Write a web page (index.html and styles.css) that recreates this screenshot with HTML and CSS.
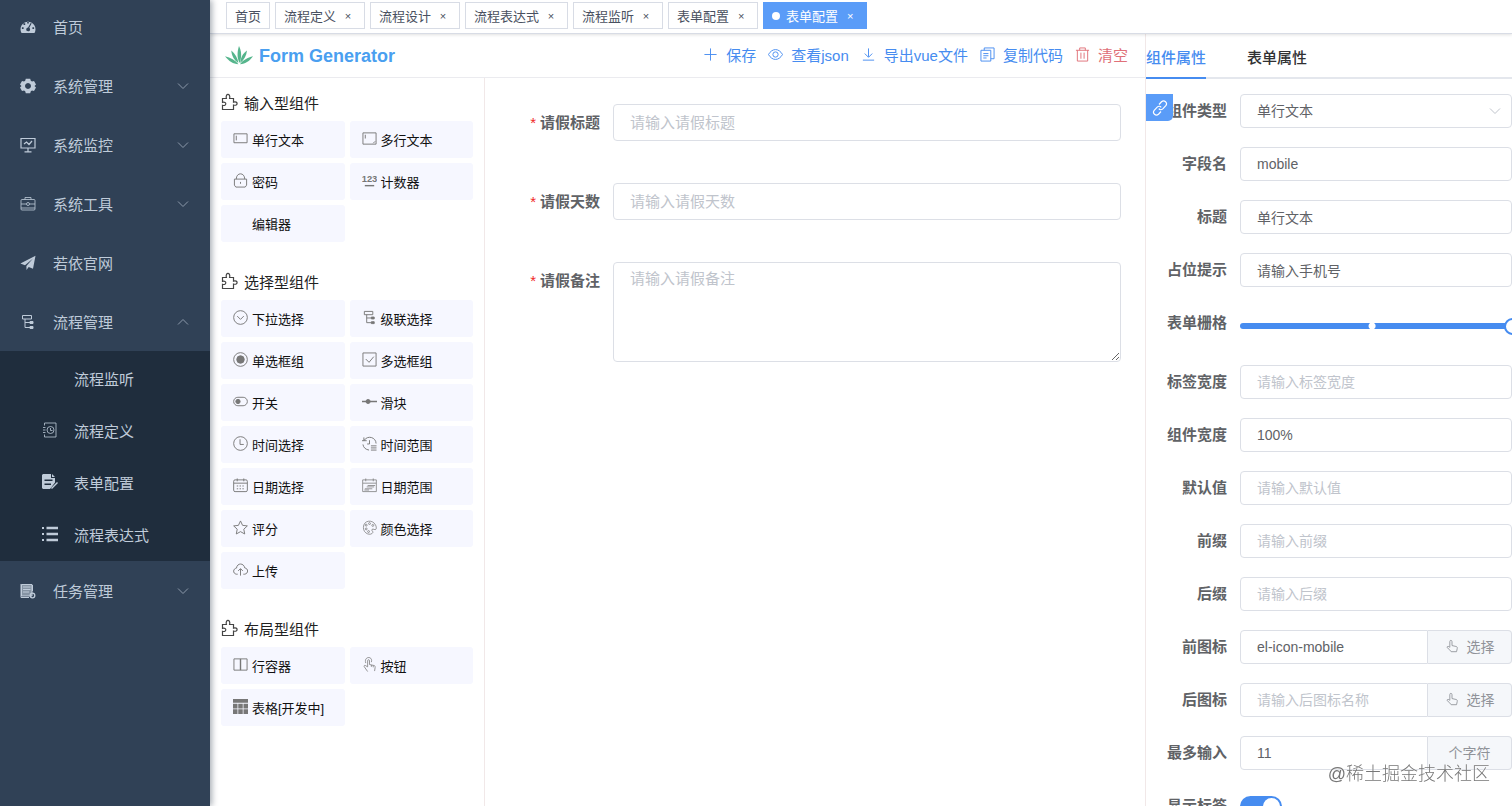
FILE: index.html
```html
<!DOCTYPE html>
<html lang="zh-CN">
<head>
    <meta charset="UTF-8">
    <meta name="viewport" content="width=device-width, initial-scale=1.0">
    <title>表单配置</title>
    <link rel="stylesheet" href="styles.css">
</head>
<body>
<!-- Shared icons -->
<svg class="sprite" aria-hidden="true">
    <symbol id="i-down" viewBox="0 0 12 12"><path d="M1 3.5l5 5 5-5"/></symbol>
    <symbol id="i-puzzle" viewBox="0 0 18 18"><path stroke-width="1.2" d="M1.500 5.500h3.900c-1.500-5.500 4.600-5.500 3.200 0h3.900v3.600c4.800-1.500 4.800 4.400 0 2.900v4.500h-11v-4.200c4.400 1.300 4.400-4.300 0-2.900z"/></symbol>
    <symbol id="i-tree" viewBox="0 0 16 16"><path d="M2.500 1.500h9v3.500h-9zM5 5v8.500h5M5 8.500h5"/><path fill="currentColor" d="M10 7.500h3v2h-3zM10 12.500h3v2h-3z"/></symbol>
    <symbol id="i-hand" viewBox="0 0 16 16"><path d="M5.500 9.500v-6.500c0-2 2.500-2 2.500 0v4.500l4.500 1c1.500.4 1.700 1 1.500 2.200l-.8 3.800h-6.200c-1-1.800-2.500-3-4.500-4.600-.8-1.400 1.400-2.200 3-.4z"/></symbol>
</svg>

<div class="app">
    <aside class="sidebar">
        <nav>
            <a class="menu-item" href="#">
                <svg class="menu-icon" viewBox="0 0 16 16"><path fill="currentColor" stroke="none" fill-rule="evenodd" d="M1.500 14a7.500 7.500 0 1 1 13 0zM7.200 2.500v2h1.600v-2zM3.500 4.300v1.700h1.700v-1.700zM1.900 8.300v1.700h1.700v-1.700zM12.400 8.300v1.700h1.700v-1.700zM10.800 3.800l-2.700 4.700c-2.400.3-2.600 3.700 0 3.800 2.300-.1 2.500-2.600 1.200-3.500l2.300-4.400z"/></svg>
                <span>首页</span>
            </a>
            <a class="menu-item" href="#">
                <svg class="menu-icon" viewBox="0 0 16 16"><path fill="currentColor" stroke="none" fill-rule="evenodd" d="M5.800.8h4.400l.6 2 1.200.7 2-.6 2 3.600-1.500 1.500 1.500 1.500-2 3.600-2-.6-1.200.7-.6 2h-4.400l-.6-2-1.200-.7-2 .6-2-3.600 1.500-1.500-1.500-1.500 2-3.600 2 .6 1.200-.7zM8 5a3 3 0 1 0 .01 0z"/></svg>
                <span>系统管理</span>
                <svg class="arrow"><use href="#i-down"/></svg>
            </a>
            <a class="menu-item" href="#">
                <svg class="menu-icon" viewBox="0 0 16 16"><path stroke-width="1.200" d="M1 1.500h14v9.500h-14zM8 11v3.500M4.500 14.800h7M4 7l2.500-2 2.500 2.500 3-3.500"/></svg>
                <span>系统监控</span>
                <svg class="arrow"><use href="#i-down"/></svg>
            </a>
            <a class="menu-item" href="#">
                <svg class="menu-icon thin" viewBox="0 0 16 16"><rect x="1" y="3.500" width="14" height="10.500" rx="1"/><path d="M5 3.500v-2h6v2M1 8h5.500M9.500 8h5.500M1 12h14"/><circle cx="8" cy="8" r="1.500"/></svg>
                <span>系统工具</span>
                <svg class="arrow"><use href="#i-down"/></svg>
            </a>
            <a class="menu-item" href="#">
                <svg class="menu-icon" viewBox="0 0 16 16"><path fill="currentColor" stroke="none" d="M15.500.8l-2.500 13-4.300-1.800-2.200 3-.1-4 6.600-7.500-8 6.700-4.600-1.800z"/></svg>
                <span>若依官网</span>
            </a>
            <a class="menu-item" href="#">
                <svg class="menu-icon"><use href="#i-tree"/></svg>
                <span>流程管理</span>
                <svg class="arrow up"><use href="#i-down"/></svg>
            </a>
            <div class="submenu">
                <a class="submenu-item" href="#"><span class="menu-icon"></span><span>流程监听</span></a>
                <a class="submenu-item" href="#">
                    <svg class="menu-icon thin" viewBox="0 0 16 16"><path d="M2.500 3.500v-2.500h11.500v14h-11.500v-2.500M1 5.500h2.500M1 8h2.500M1 10.500h2.500M8.500 6v2.500h2"/><circle cx="8.500" cy="8" r="3.500"/></svg>
                    <span>流程定义</span>
                </a>
                <a class="submenu-item" href="#">
                    <svg class="menu-icon" viewBox="0 0 16 16"><path fill="currentColor" stroke="none" fill-rule="evenodd" d="M1 0h8v4h4v4.500l-5 6.500h-7l-1-1v-13zM2.500 5.500v1.500h8v-1.500zM2.500 9.500v1.500h6.500v-1.500zM10 0l3 3h-3z"/><path stroke-width="1.500" d="M9.500 14.500l6-6"/></svg>
                    <span>表单配置</span>
                </a>
                <a class="submenu-item" href="#">
                    <svg class="menu-icon" viewBox="0 0 16 16"><path stroke-width="2.600" d="M4.500 2h11.500M4.500 8h11.500M4.500 14h11.500"/><path stroke-width="2" d="M0 2h2M0 8h2M0 14h2"/></svg>
                    <span>流程表达式</span>
                </a>
            </div>
            <a class="menu-item" href="#">
                <svg class="menu-icon" viewBox="0 0 16 16"><path fill="currentColor" fill-opacity=".6" d="M1.500 1.500h10.500v11.500h-10.500z"/><path d="M1 1v13.500h8M3 4h7.500M3 6.500h7.500M3 9h6M12.500 2v6"/><circle cx="12.500" cy="12.500" r="2.300" stroke-width="1.300"/></svg>
                <span>任务管理</span>
                <svg class="arrow"><use href="#i-down"/></svg>
            </a>
        </nav>
    </aside>

    <div class="main">
        <nav class="tags">
            <a class="tag" href="#">首页</a>
            <a class="tag" href="#">流程定义<span class="close">×</span></a>
            <a class="tag" href="#">流程设计<span class="close">×</span></a>
            <a class="tag" href="#">流程表达式<span class="close">×</span></a>
            <a class="tag" href="#">流程监听<span class="close">×</span></a>
            <a class="tag" href="#">表单配置<span class="close">×</span></a>
            <a class="tag active" href="#">表单配置<span class="close">×</span></a>
        </nav>

        <div class="boards">
            <section class="left-board">
                <header class="board-header logo">
                    <svg class="logo-icon" viewBox="0 0 28 20"><g fill="#55b58c" stroke="none"><path d="M14.500 17c-2.500-5-2.500-11-.5-17 2.500 5 3 11 .5 17z"/><path d="M13.300 17c-4-3-6.500-6.500-7-12.500 3.500 3 6.500 7.500 7 12.500z"/><path d="M15.200 17c.5-5.500 2.500-9.500 6.800-12.500-.5 5-3 9.500-6.800 12.500z"/><path d="M13.500 18.200c-5.500-.2-9.500-3-13.500-8 5.500 1.500 10.500 4 13.500 8z"/><path d="M15 18.200c3-4.500 7.500-6.500 13-8-3 4.500-7.500 7.500-13 8z"/></g></svg>
                    <span>Form Generator</span>
                </header>
                <div class="components">
                    <h3><svg><use href="#i-puzzle"/></svg>输入型组件</h3>
                    <div class="component-list">
                        <button type="button"><svg viewBox="0 0 16 16"><path d="M1 3h14v9.500h-14zM3.500 5v5"/></svg>单行文本</button>
                        <button type="button"><svg viewBox="0 0 16 16"><path d="M1 2h14v12h-14zM3.500 4v4M12 13l2-2"/></svg>多行文本</button>
                        <button type="button"><svg viewBox="0 0 16 16"><path d="M1.500 6.500h13v6.500l-1.500 2h-10l-1.500-2zM3.500 6.500c0-7.500 9-7.500 9 0M8 9.500v2"/></svg>密码</button>
                        <button type="button"><svg viewBox="0 0 16 16"><text class="digits" x="8" y="10">123</text><path stroke-width="1.500" d="M3 13.500h10"/></svg>计数器</button>
                        <button type="button"><svg viewBox="0 0 16 16"></svg>编辑器</button>
                    </div>

                    <h3><svg><use href="#i-puzzle"/></svg>选择型组件</h3>
                    <div class="component-list">
                        <button type="button"><svg viewBox="0 0 16 16"><circle cx="8" cy="8" r="7.300"/><path d="M4.500 6.500l3.500 3.500 3.500-3.500"/></svg>下拉选择</button>
                        <button type="button"><svg><use href="#i-tree"/></svg>级联选择</button>
                        <button type="button"><svg viewBox="0 0 16 16"><circle cx="8" cy="8" r="7.300"/><circle cx="8" cy="8" r="4" fill="currentColor"/></svg>单选框组</button>
                        <button type="button"><svg viewBox="0 0 16 16"><path d="M1 1h14v14h-14zM4 7.500l3.500 3.500 5-6"/></svg>多选框组</button>
                        <button type="button"><svg viewBox="0 0 16 16"><rect x=".7" y="3.500" width="14.600" height="9" rx="4.500"/><circle cx="5.300" cy="8" r="2.300" fill="currentColor"/></svg>开关</button>
                        <button type="button"><svg viewBox="0 0 16 16"><path stroke-width="1.600" d="M0 8h16"/><circle cx="6.500" cy="8" r="2.200" fill="currentColor"/></svg>滑块</button>
                        <button type="button"><svg viewBox="0 0 16 16"><circle cx="8" cy="8" r="7.300"/><path d="M7.500 3.500v5.500h4"/></svg>时间选择</button>
                        <button type="button"><svg viewBox="0 0 16 16"><path d="M2 5c4-6.500 13-3.500 13 3M2 5v-3.500M2 5h-2M2 5h3M8 4.500v4h-2.500M1 9c.5 3.500 3 5.500 6.500 6M9.500 10.500h6M9.500 12.700h6M9.500 15h6"/></svg>时间范围</button>
                        <button type="button"><svg viewBox="0 0 16 16"><rect x=".7" y="2" width="14.600" height="12.500" rx="1.500"/><path d="M1 5.500h14M4.500.5v3M11.500.5v3"/><path stroke-dasharray="1.500 1.500" d="M4 8.500h9M4 11.500h9"/></svg>日期选择</button>
                        <button type="button"><svg class="thin" viewBox="0 0 16 16"><path d="M.7 2h14.600v12.500h-14.600zM1 5.500h14M4 .5v3M12 .5v3M6 8h8M5 9.500h8M3 11.500h8M2.500 12.800h5"/></svg>日期范围</button>
                        <button type="button"><svg viewBox="0 0 16 16"><path d="M8 1l2.200 4.700 5.100.6-3.800 3.500 1 5.100-4.500-2.500-4.500 2.500 1-5.100-3.800-3.500 5.100-.6z"/></svg>评分</button>
                        <button type="button"><svg class="thin" viewBox="0 0 16 16"><path d="M14.500 5.500c-3-6.500-13-5.500-13 2.500 0 7 8 9 10 5.500.7-1.500-1.800-2-.8-3.500 1.200-1.300 3.300 1.500 4.300-.3.500-1 .2-2.900-.5-4.200z"/><circle cx="4.500" cy="9.500" r="1"/><circle cx="4.500" cy="5.500" r="1"/><circle cx="8" cy="3.800" r="1"/><circle cx="11.500" cy="5.800" r="1"/><circle cx="7" cy="12.300" r="1"/></svg>颜色选择</button>
                        <button type="button"><svg viewBox="0 0 16 16"><path d="M5 13h-1.500c-4-.8-3.500-6 .2-6.500.8-6 8-5.500 8.800-.2 4 .5 4.200 6 0 6.700h-1.500M8 14.500v-7M5.500 9.500l2.500-2.500 2.500 2.500"/></svg>上传</button>
                    </div>

                    <h3><svg><use href="#i-puzzle"/></svg>布局型组件</h3>
                    <div class="component-list">
                        <button type="button"><svg viewBox="0 0 16 16"><path d="M1 2h14v12h-14z"/><path stroke-width="1.500" d="M8 2v12"/></svg>行容器</button>
                        <button type="button"><svg class="thin" viewBox="0 0 16 16"><path d="M6 10.500v-6.500c0-1.500 2-1.500 2 0v4l4.500 1c1.500.3 1.700 1 1.500 2.200l-.6 3.800M6 10.500l-2.500-1.500c-1.200-.3-1.600.7-1 1.500l3.500 5M10 8.500v2M12 9v2M4 6.500c-2.500-7.500 8-8 6-1"/></svg>按钮</button>
                        <button type="button"><svg viewBox="0 0 16 16"><path fill="currentColor" stroke="none" d="M0 0h16v4h-16zM0 5h4.800v5h-4.800zM5.600 5h4.800v5h-4.800zM11.200 5h4.800v5h-4.800zM0 11h4.800v5h-4.800zM5.600 11h4.800v5h-4.800zM11.200 11h4.800v5h-4.800z"/></svg>表格[开发中]</button>
                    </div>
                </div>
            </section>

            <section class="center-board">
                <header class="board-header toolbar">
                    <button type="button"><svg viewBox="0 0 16 16"><path d="M8 1.500v13M1.500 8h13"/></svg>保存</button>
                    <button type="button"><svg viewBox="0 0 16 16"><path d="M.5 8c4-7 11-7 15 0-4 7-11 7-15 0z"/><circle cx="8" cy="8" r="2.800"/></svg>查看json</button>
                    <button type="button"><svg viewBox="0 0 16 16"><path d="M8 1.500v9M4 7l4 4 4-4M2 14h12"/></svg>导出vue文件</button>
                    <button type="button"><svg viewBox="0 0 16 16"><path d="M4.500 3.500v-2.500h10.500v11.500h-3.500M1 3.500h10.500v11.500h-10.500zM3.500 7h5.500M3.500 9.300h5.500M3.500 11.700h3.500"/></svg>复制代码</button>
                    <button type="button" class="danger"><svg viewBox="0 0 16 16"><path d="M1 3.500h14M5 3.500v-2.500h6v2.500M2.500 3.500v11.500h11v-11.500M6.300 6v6.500M9.700 6v6.500"/></svg>清空</button>
                </header>
                <form class="preview-form">
                    <div class="form-item">
                        <label class="required" for="title">请假标题</label>
                        <input type="text" id="title" placeholder="请输入请假标题">
                    </div>
                    <div class="form-item">
                        <label class="required" for="days">请假天数</label>
                        <input type="text" id="days" placeholder="请输入请假天数">
                    </div>
                    <div class="form-item">
                        <label class="required" for="remark">请假备注</label>
                        <textarea id="remark" placeholder="请输入请假备注"></textarea>
                    </div>
                </form>
            </section>

            <section class="right-board">
                <div class="tabs">
                    <button type="button" class="active">组件属性</button>
                    <button type="button">表单属性</button>
                </div>
                <a class="doc-link" href="#" aria-label="组件文档">
                    <svg viewBox="0 0 16 16"><path stroke-width="1.200" d="M7 4.500l2.500-2.700c2.800-2.500 6.500 1 4.300 3.900l-3 3.200c-1.500 1.300-3 1-4-.2M9 11.500l-2.500 2.700c-2.800 2.500-6.500-1-4.300-3.900l3-3.200c1.500-1.300 3-1 4 .2"/></svg>
                </a>
                <form class="props-form">
                    <div class="form-item">
                        <label for="type">组件类型</label>
                        <div class="select">
                            <select id="type"><option>单行文本</option></select>
                            <svg><use href="#i-down"/></svg>
                        </div>
                    </div>
                    <div class="form-item">
                        <label for="field">字段名</label>
                        <input type="text" id="field" value="mobile">
                    </div>
                    <div class="form-item">
                        <label for="label">标题</label>
                        <input type="text" id="label" value="单行文本">
                    </div>
                    <div class="form-item">
                        <label for="placeholder">占位提示</label>
                        <input type="text" id="placeholder" value="请输入手机号">
                    </div>
                    <div class="form-item slider-item">
                        <label for="span">表单栅格</label>
                        <input type="range" id="span" min="1" max="24" value="24">
                    </div>
                    <div class="form-item">
                        <label for="label-width">标签宽度</label>
                        <input type="text" id="label-width" placeholder="请输入标签宽度">
                    </div>
                    <div class="form-item">
                        <label for="width">组件宽度</label>
                        <input type="text" id="width" value="100%">
                    </div>
                    <div class="form-item">
                        <label for="default">默认值</label>
                        <input type="text" id="default" placeholder="请输入默认值">
                    </div>
                    <div class="form-item">
                        <label for="prepend">前缀</label>
                        <input type="text" id="prepend" placeholder="请输入前缀">
                    </div>
                    <div class="form-item">
                        <label for="append">后缀</label>
                        <input type="text" id="append" placeholder="请输入后缀">
                    </div>
                    <div class="form-item grouped">
                        <label for="prefix-icon">前图标</label>
                        <input type="text" id="prefix-icon" value="el-icon-mobile">
                        <button type="button" class="addon"><svg><use href="#i-hand"/></svg>选择</button>
                    </div>
                    <div class="form-item grouped">
                        <label for="suffix-icon">后图标</label>
                        <input type="text" id="suffix-icon" placeholder="请输入后图标名称">
                        <button type="button" class="addon"><svg><use href="#i-hand"/></svg>选择</button>
                    </div>
                    <div class="form-item grouped">
                        <label for="max-length">最多输入</label>
                        <input type="text" id="max-length" value="11">
                        <span class="addon">个字符</span>
                    </div>
                    <div class="form-item">
                        <label for="show-label">显示标签</label>
                        <input type="checkbox" class="switch" id="show-label" checked>
                    </div>
                </form>
            </section>
        </div>
    </div>
</div>
<div class="watermark">@稀土掘金技术社区</div>
</body>
</html>
```
FILE: styles.css
```css
*,
*::before,
*::after {
    box-sizing: border-box;
}

body {
    margin: 0;
    font-family: "Liberation Sans", "Noto Sans CJK SC", sans-serif;
    font-size: 15px;
    color: #606266;
    background-color: #fff;
    overflow: hidden;
}

button,
input,
select,
textarea {
    font-family: inherit;
    font-size: inherit;
    color: inherit;
}

button {
    padding: 0;
    border: none;
    background: none;
    cursor: pointer;
}

a {
    color: inherit;
    text-decoration: none;
}

svg {
    flex: none;
    fill: none;
    stroke: currentColor;
    stroke-width: 1;
}

.thin {
    stroke-width: 0.8;
}

.sprite {
    display: none;
}

.app {
    display: flex;
    height: 100vh;
}

/* Sidebar */
.sidebar {
    z-index: 3;
    flex: none;
    width: 210px;
    overflow: hidden;
    color: #bfcbd9;
    background-color: #304156;
    box-shadow: 2px 0 6px rgba(0, 21, 41, 0.35);
}

.sidebar nav {
    margin-top: -3px;
}

.menu-item,
.submenu-item {
    display: flex;
    align-items: center;
    gap: 17px;
    height: 59px;
    padding: 0 21px 0 20px;
}

.menu-icon {
    width: 16px;
    height: 16px;
}

.arrow {
    width: 12px;
    height: 12px;
    margin-left: auto;
    color: #8d9aab;
}

.arrow.up {
    transform: rotate(180deg);
}

.submenu {
    padding: 1px 0;
    background-color: #1f2d3d;
}

.submenu-item {
    gap: 16px;
    height: 52px;
    padding-left: 42px;
}

/* Opened pages */
.main {
    display: flex;
    flex: 1;
    flex-direction: column;
    min-width: 0;
}

.tags {
    z-index: 2;
    display: flex;
    gap: 5px;
    padding: 2px 16px 4px;
    border-bottom: 1px solid #d8dce5;
    box-shadow: 0 1px 3px rgba(0, 0, 0, 0.12);
}

.tag {
    display: flex;
    align-items: center;
    height: 27px;
    padding: 0 8px;
    border: 1px solid #d8dce5;
    font-size: 13px;
    color: #495060;
}

.close {
    width: 16px;
    margin-left: 4px;
    font-size: 11px;
    text-align: center;
}

.tag.active {
    color: #fff;
    border-color: #5a9cf8;
    background-color: #5a9cf8;
}

.tag.active::before {
    content: "";
    width: 8px;
    height: 8px;
    margin-right: 6px;
    border-radius: 50%;
    background-color: #fff;
}

.boards {
    display: flex;
    flex: 1;
    min-height: 0;
}

.board-header {
    display: flex;
    align-items: center;
    height: 44px;
    border-bottom: 1px solid #ebebef;
}

/* Component palette */
.left-board {
    flex: none;
    width: 275px;
}

.logo {
    gap: 6px;
    padding-left: 15px;
    font-size: 18px;
    font-weight: bold;
    line-height: 24px;
    color: #4a9ff0;
}

.logo-icon {
    width: 28px;
    height: 20px;
}

.components {
    height: 100%;
    padding: 12px 11px;
    border-right: 1px solid #f1e8e8;
}

.components h3 {
    display: flex;
    align-items: center;
    gap: 5px;
    height: 24px;
    margin: 0 0 7px;
    font-size: 15px;
    font-weight: normal;
    color: #222;
}

.components h3 svg {
    width: 18px;
    height: 18px;
    color: #444;
}

.component-list {
    display: grid;
    grid-template-columns: 1fr 1fr;
    gap: 5px;
    margin-bottom: 27px;
}

.component-list button {
    display: flex;
    align-items: center;
    gap: 4px;
    height: 37px;
    padding-left: 12px;
    border-radius: 3px;
    font-size: 13px;
    color: #111;
    background-color: #f6f7ff;
    cursor: move;
}

.component-list svg {
    width: 15px;
    height: 15px;
    margin-bottom: 2px;
    color: #777;
}

.digits {
    font-size: 10px;
    font-weight: bold;
    text-anchor: middle;
    fill: currentColor;
    stroke: none;
}

/* Drawing board */
.center-board {
    flex: 1;
    min-width: 0;
}

.toolbar {
    justify-content: flex-end;
    gap: 12px;
    padding: 0 17px 2px 0;
    color: #468cf0;
}

.toolbar button {
    display: flex;
    align-items: center;
    gap: 8px;
}

.toolbar svg {
    width: 15px;
    height: 15px;
}

.toolbar .danger {
    color: #e07078;
}

.form-item {
    display: flex;
}

.form-item label {
    flex: none;
    padding-right: 13px;
    font-weight: bold;
    text-align: right;
}

.form-item input[type="text"],
.form-item select,
.form-item textarea {
    flex: 1;
    min-width: 0;
    padding: 0 16px;
    border: 1px solid #dcdfe6;
    border-radius: 4px;
    background-color: #fff;
}

.form-item ::placeholder {
    color: #c0c4cc;
}

.preview-form {
    display: flex;
    flex-direction: column;
    gap: 42px;
    padding: 26px 24px 0 0;
}

.preview-form label {
    width: 128px;
    line-height: 37px;
}

.preview-form input[type="text"] {
    height: 37px;
}

.preview-form textarea {
    height: 100px;
    padding: 5px 16px;
    line-height: 22px;
}

.required::before {
    content: "*";
    margin-right: 4px;
    font-weight: normal;
    color: #f02828;
}

/* Property panel */
.right-board {
    position: relative;
    flex: none;
    width: 367px;
    overflow: hidden;
    border-left: 1px solid #f1e8e8;
}

.tabs {
    display: flex;
    gap: 41px;
    height: 45px;
    border-bottom: 2px solid #e4e7ed;
}

.tabs button {
    height: 45px;
    padding-top: 2px;
    border-bottom: 2px solid transparent;
    font-weight: 500;
    color: #303133;
}

.tabs .active {
    border-bottom-color: #468cf0;
    color: #468cf0;
}

.doc-link {
    position: absolute;
    top: 60px;
    left: 0;
    display: flex;
    align-items: center;
    justify-content: center;
    width: 27px;
    height: 27px;
    border-radius: 0 0 5px 0;
    color: #fff;
    background-color: #5a9cf8;
}

.doc-link svg {
    width: 16px;
    height: 16px;
}

.props-form {
    display: flex;
    flex-direction: column;
    gap: 19px;
    padding-top: 15px;
    font-size: 14px;
}

.props-form .form-item {
    height: 34px;
}

.props-form label {
    width: 94px;
    font-size: 15px;
    line-height: 34px;
}

.select {
    position: relative;
    display: flex;
    flex: 1;
}

.form-item select {
    appearance: none;
}

.select svg {
    position: absolute;
    top: 11px;
    right: 11px;
    width: 12px;
    height: 12px;
    color: #c0c4cc;
    pointer-events: none;
}

.props-form .slider-item {
    height: 40px;
}

/* The handle hangs half over the end of the track */
input[type="range"] {
    flex: 1;
    appearance: none;
    margin: 0 -9px 0 0;
    background: none;
}

input[type="range"]::-webkit-slider-runnable-track {
    height: 6px;
    border-radius: 3px;
    background: radial-gradient(circle at 47% 50%, #fff 3px, #468cf0 4px);
}

input[type="range"]::-webkit-slider-thumb {
    appearance: none;
    width: 17px;
    height: 17px;
    margin-top: -5px;
    border: 2px solid #468cf0;
    border-radius: 50%;
    background-color: #fff;
}

.form-item.grouped input {
    border-radius: 4px 0 0 4px;
}

.addon {
    display: flex;
    flex: none;
    align-items: center;
    justify-content: center;
    gap: 8px;
    width: 84px;
    padding-bottom: 2px;
    border: 1px solid #dcdfe6;
    border-left: none;
    border-radius: 0 4px 4px 0;
    color: #909399;
    background-color: #f5f7fa;
}

.addon svg {
    width: 14px;
    height: 14px;
}

.switch {
    appearance: none;
    display: flex;
    justify-content: flex-end;
    align-self: center;
    width: 42px;
    height: 21px;
    margin: 0;
    padding: 2px;
    border-radius: 11px;
    background-color: #468cf0;
}

.switch::before {
    content: "";
    width: 17px;
    height: 17px;
    border-radius: 50%;
    background-color: #fff;
}

.switch:not(:checked) {
    justify-content: flex-start;
    background-color: #dcdfe6;
}

.watermark {
    position: fixed;
    z-index: 5;
    right: 22px;
    bottom: 21px;
    font-size: 18px;
    font-weight: 300;
    color: #777;
    text-shadow: 0 0 2px #fff;
    pointer-events: none;
}
```
